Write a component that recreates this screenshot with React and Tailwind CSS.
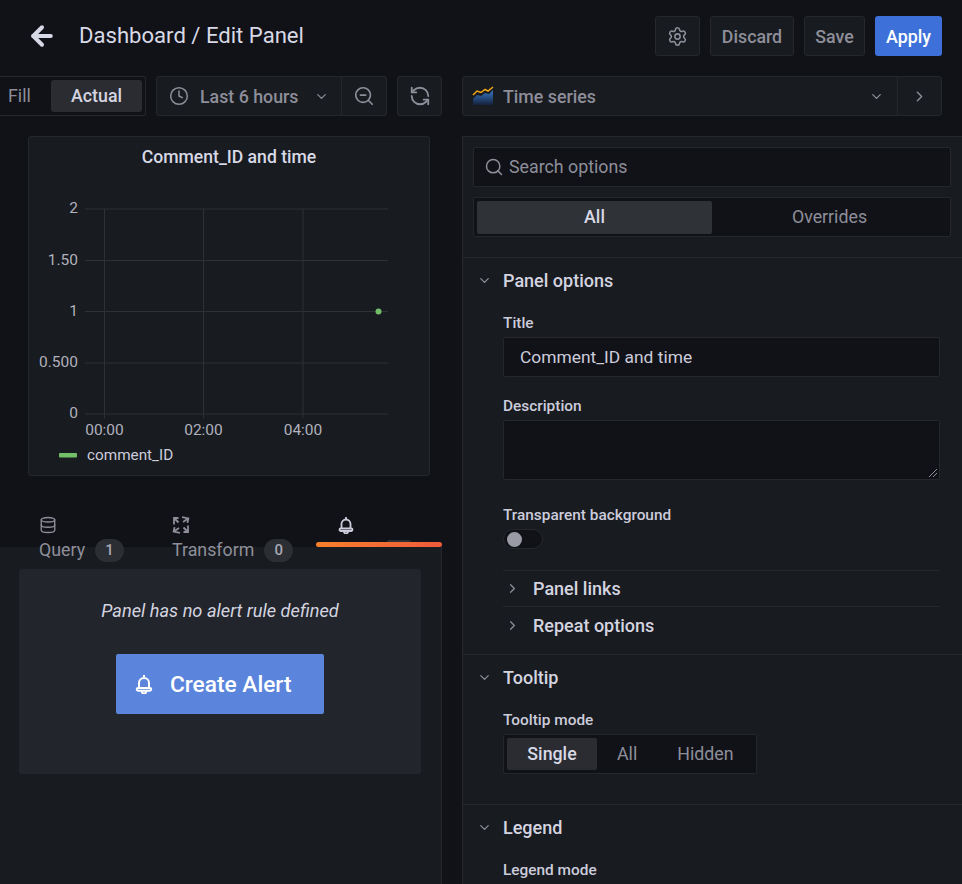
import { ArrowLeft, ChevronDown, ChevronRight, Clock, Database, RefreshCcw, Search, Settings, ZoomOut } from "lucide-react";

function TransformIcon() {
  return <svg width="18" height="18" viewBox="0 0 18 18" fill="none" stroke="#8e8e9a" strokeWidth="1.800">
    <path d="M2 8.500V2H6.500M2.500 2.500L6.500 6.500" />
    <path d="M9.500 2H16V6.500M15.500 2.500L11.500 6.500" transform="rotate(12 14 4)" />
    <path d="M16 9.500V16H11.500M15.500 15.500L11.500 11.500" />
    <path d="M8.500 16H2V11.500M2.500 15.500L6.500 11.500" transform="rotate(12 4 14)" />
  </svg>
}

function BellIcon({ size, color }) {
  return <svg width={size} height={size} viewBox="0 0 18 18" fill="none" stroke={color} strokeWidth="1.800">
    <path d="M9 1V3" />
    <path d="M4.500 12.500V8A4.500 4.500 0 0 1 13.500 8V12.500" />
    <rect x="2.500" y="12.500" width="13" height="2.500" rx="1.250" />
    <path d="M7 15.500A2 2 0 0 0 11 15.500" />
  </svg>
}

function TimeSeriesIcon() {
  return <svg width="22" height="20" viewBox="0 0 22 20" fill="none">
    <defs>
      <linearGradient id="tsfill" x1="0" y1="0" x2="0" y2="1">
        <stop offset="0" stopColor="#3a78c9" />
        <stop offset="1" stopColor="#14213a" />
      </linearGradient>
    </defs>
    <path d="M1 13L5 9L9 10L13 7L17 8L21 4V19H1Z" fill="url(#tsfill)" />
    <path d="M1 9L5 5L9 6.500L13 3.500L16 5L21 1" stroke="#f2a71b" strokeWidth="1.500" />
  </svg>
}

function Chart() {
  const rows = [[209, "2"], [260.5, "1.50"], [311.5, "1"], [363, "0.500"], [414, "0"]];
  const cols = [[104.5, "00:00"], [203.5, "02:00"], [303, "04:00"]];
  return <svg width="400" height="309" viewBox="29 166 400 309" className="block">
    {rows.map(([y, label]) => <g key={label}>
      <line x1="85" x2="388" y1={y} y2={y} stroke="#2e3136" />
      <text x="78" y={y + 4} textAnchor="end" fontSize="15.500" fill="#b1b1bd">{label}</text>
    </g>)}
    {cols.map(([x, label]) => <g key={label}>
      <line x1={x} x2={x} y1="209" y2="418" stroke="#2e3136" />
      <text x={x} y="434.500" textAnchor="middle" fontSize="15.500" fill="#b1b1bd">{label}</text>
    </g>)}
    <circle cx="378.500" cy="311.500" r="3" fill="#73bf69" />
    <rect x="59" y="453" width="18" height="4.500" rx="1" fill="#73bf69" />
    <text x="87" y="459.500" fontSize="15.300" fill="#ccccdc">comment_ID</text>
  </svg>
}

function Tab({ icon, label, count, width }) {
  return <div className={"flex flex-col items-start " + width}>
    <div className="h-[18px] flex items-center mt-[1px]">{icon}</div>
    <div className="flex items-center mt-[3px] text-[17.800px] text-[#8e8e9a] leading-[26px]">
      {label}
      <span className="ml-[10px] w-[29px] h-[23px] rounded-full bg-[#2b2e33] flex items-center justify-center text-[15px] font-medium text-[#a8a8b4]">{count}</span>
    </div>
  </div>
}

function SectionHeader({ open, title, sub }) {
  const Chevron = open ? ChevronDown : ChevronRight;
  return <div className={"flex items-center text-[18px] font-medium text-[#d4d4e0] " + (sub ? "h-[36px]" : "")}>
    <Chevron size={15} strokeWidth={2} className={"text-[#8e8e9a] " + (sub ? "ml-[2px] mr-[13px]" : "mr-[11px]")} />
    {title}
  </div>
}

function Label({ children }) {
  return <div className="text-[15.400px] leading-[18px] font-medium text-[#ccccdc]">{children}</div>
}

export default function App() {
  return <div className="w-[962px] h-[884px] overflow-hidden bg-[#111217] text-[#ccccdc] font-['Roboto',sans-serif] flex flex-col">
    <header className="h-[76px] shrink-0 flex items-start pt-[16px] pl-[27px] pr-[20px]">
      <ArrowLeft size={30} strokeWidth={3.200} className="mt-[5px] text-[#d8d9e6]" />
      <div className="ml-[22px] text-[22.100px] leading-[38px] text-[#d8d9e6]">Dashboard / Edit Panel</div>
      <div className="ml-auto flex gap-[10px]">
        <button className="w-[45px] h-[40px] rounded-[3px] border border-[#24272c] bg-[#181b1f] flex items-center justify-center text-[#8e8e9a]"><Settings size={21} strokeWidth={1.800} /></button>
        <button className="w-[84px] h-[40px] pt-[2px] rounded-[3px] border border-[#24272c] bg-[#181b1f] text-[17.800px] font-medium text-[#8e8e9a]">Discard</button>
        <button className="w-[61px] h-[40px] pt-[2px] rounded-[3px] border border-[#24272c] bg-[#181b1f] text-[17.800px] font-medium text-[#8e8e9a]">Save</button>
        <button className="w-[67px] h-[40px] pt-[2px] rounded-[3px] bg-[#3d71d9] text-[17.800px] font-medium text-white">Apply</button>
      </div>
    </header>

    <div className="h-[40px] shrink-0 flex">
      <div className="w-[462px] shrink-0 flex">
        <div className="w-[146px] h-[40px] rounded-r-[3px] border border-l-0 border-[#24272c] flex items-center pr-[3px]">
          <span className="w-[51px] pl-[8px] text-[17.800px] text-[#8e8e9a]">Fill</span>
          <span className="flex-1 h-[32px] rounded-[3px] bg-[#2a2c31] flex items-center justify-center text-[17.800px] font-medium text-[#d4d4e0]">Actual</span>
        </div>
        <div className="ml-[10px] w-[231px] h-[40px] rounded-[3px] border border-[#24272c] bg-[#181b1f] flex items-center text-[#8e8e9a]">
          <Clock size={20} strokeWidth={1.800} className="ml-[12px]" />
          <span className="ml-[11px] pt-[2px] text-[17.800px] font-medium">Last 6 hours</span>
          <ChevronDown size={15} strokeWidth={2} className="ml-[15px]" />
          <div className="ml-auto w-[45px] h-full border-l border-[#24272c] flex items-center justify-center"><ZoomOut size={22} strokeWidth={1.800} /></div>
        </div>
        <div className="ml-[10px] w-[45px] h-[40px] rounded-[3px] border border-[#24272c] bg-[#181b1f] flex items-center justify-center text-[#8e8e9a]"><RefreshCcw size={22} strokeWidth={2} /></div>
      </div>
      <div className="w-[480px] h-[40px] rounded-[3px] border border-[#24272c] bg-[#181b1f] flex items-center text-[#8e8e9a]">
        <div className="ml-[9px]"><TimeSeriesIcon /></div>
        <span className="ml-[9px] pt-[2px] text-[17.800px] font-medium">Time series</span>
        <ChevronDown size={15} strokeWidth={2} className="ml-auto mr-[13px]" />
        <div className="w-[44px] h-full border-l border-[#24272c] flex items-center justify-center"><ChevronRight size={17} strokeWidth={2} /></div>
      </div>
    </div>

    <div className="flex-1 min-h-0 flex mt-[20px]">
      <div className="w-[442px] shrink-0 flex flex-col">
        <div className="ml-[28px] w-[402px] h-[340px] shrink-0 rounded-[3px] border border-[#24272c] bg-[#181b1f] overflow-hidden">
          <div className="h-[29px] pt-[8px] text-center text-[17.600px] leading-[24px] font-medium text-[#d8d9e6]">Comment_ID and time</div>
          <Chart />
        </div>
        <div className="relative z-10 h-[71px] shrink-0 flex pl-[39px] pt-[39px]">
          <Tab icon={<Database size={18} strokeWidth={1.800} className="text-[#8e8e9a]" />} label="Query" count="1" width="w-[133px]" />
          <Tab icon={<TransformIcon />} label="Transform" count="0" width="w-[165px]" />
          <div className="mt-[1px]"><BellIcon size={18} color="#ccccdc" /></div>
          <div className="absolute left-[316px] right-0 bottom-0 h-[5px] rounded-full bg-gradient-to-r from-[#f77f2a] to-[#ef5a3a]" />
          <div className="absolute left-[387px] top-[64px] w-[24px] h-[2px] rounded-t-full bg-[#2b2e33]" />
        </div>
        <div className="flex-1 bg-[#181b1f] border-r border-[#24272c] pt-[22px] pl-[19px]">
          <div className="w-[402px] h-[205px] rounded-[3px] bg-[#22252b] flex flex-col items-center pt-[30px]">
            <div className="text-[18.200px] leading-[24px] italic text-[#d4d4e0]">Panel has no alert rule defined</div>
            <button className="mt-[31px] w-[208px] h-[60px] rounded-[2px] bg-[#5b85dc] flex items-center pl-[18px] text-white text-[22.700px] font-medium">
              <BellIcon size={20} color="#ffffff" />
              <span className="ml-[16px] pt-[2px]">Create Alert</span>
            </button>
          </div>
        </div>
      </div>

      <div className="w-[20px] shrink-0" />

      <div className="flex-1 min-w-0 bg-[#181b1f] border-t border-l border-[#24272c]">
        <div className="px-[10px] pt-[10px] pr-[11px]">
          <div className="h-[40px] w-[478px] rounded-[2px] border border-[#24272c] bg-[#111217] flex items-center text-[#8e8e9a]">
            <Search size={20} strokeWidth={1.800} className="ml-[10px]" />
            <span className="ml-[5px] pt-[1px] text-[17.800px]">Search options</span>
          </div>
          <div className="mt-[10px] h-[40px] w-[478px] rounded-[2px] border border-[#24272c] bg-[#111217] flex items-center p-[3px]">
            <span className="w-[235px] h-[33px] rounded-[2px] bg-[#2f3237] flex items-center justify-center text-[17.800px] font-medium text-[#d8d9e6]">All</span>
            <span className="flex-1 text-center text-[17.800px] text-[#8e8e9a]">Overrides</span>
          </div>
        </div>

        <section className="mt-[20px] border-t border-[#24272c] pl-[14px] pt-[9px] h-[397px]">
          <SectionHeader open title="Panel options" />
          <div className="ml-[26px] w-[437px] mt-[20px]">
            <Label>Title</Label>
            <div className="mt-[5px] h-[40px] rounded-[2px] border border-[#24272c] bg-[#111217] flex items-center pl-[16px] text-[17.400px] text-[#ccccdc]">Comment_ID and time</div>
            <div className="mt-[20px]"><Label>Description</Label></div>
            <div className="relative mt-[5px] h-[60px] rounded-[2px] border border-[#24272c] bg-[#111217]">
              <svg width="10" height="10" viewBox="0 0 10 10" className="absolute right-[1px] bottom-[1px]" stroke="#8e8e9a"><path d="M1 9L9 1M5 9L9 5" /></svg>
            </div>
            <div className="mt-[26px]"><Label>Transparent background</Label></div>
            <div className="mt-[5px] w-[40px] h-[20px] rounded-full border border-[#24272c] bg-[#111217] flex items-center pl-[3px]">
              <span className="w-[15px] h-[15px] rounded-full bg-[#9a9aa6]" />
            </div>
            <div className="mt-[21px] border-t border-[#24272c] h-[36px] flex items-center"><SectionHeader sub title="Panel links" /></div>
            <div className="border-t border-[#24272c] h-[38px] flex items-center"><SectionHeader sub title="Repeat options" /></div>
          </div>
        </section>

        <section className="border-t border-[#24272c] pl-[14px] pt-[9px] h-[150px]">
          <SectionHeader open title="Tooltip" />
          <div className="ml-[26px] mt-[20px]">
            <Label>Tooltip mode</Label>
            <div className="mt-[5px] w-[254px] h-[40px] rounded-[2px] border border-[#24272c] bg-[#111217] flex items-center p-[3px] text-[17.800px] text-[#8e8e9a]">
              <span className="w-[90px] h-[32px] rounded-[2px] bg-[#2a2c31] flex items-center justify-center font-medium text-[#d8d9e6]">Single</span>
              <span className="ml-[20px]">All</span>
              <span className="ml-[40px]">Hidden</span>
            </div>
          </div>
        </section>

        <section className="border-t border-[#24272c] pl-[14px] pt-[9px]">
          <SectionHeader open title="Legend" />
          <div className="ml-[26px] mt-[20px]"><Label>Legend mode</Label></div>
        </section>
      </div>
    </div>
  </div>
}
